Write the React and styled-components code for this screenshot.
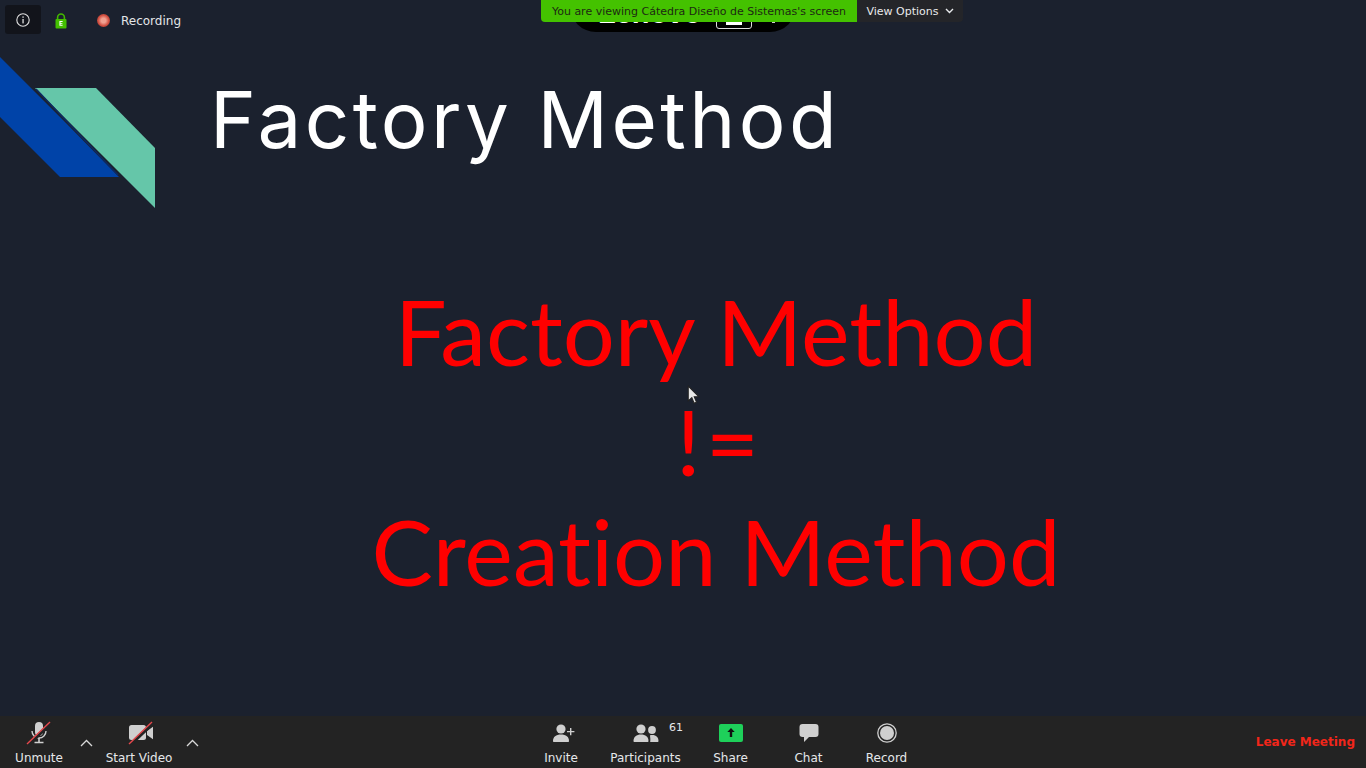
import styled, { createGlobalStyle } from "styled-components";

const GlobalStyle = createGlobalStyle`
  html, body {
    margin: 0;
    padding: 0;
    overflow: hidden;
    background: #1b212e;
  }
`;

const Page = styled.div`
  position: relative;
  width: 1366px;
  height: 768px;
  display: flex;
  flex-direction: column;
  font-family: "DejaVu Sans", sans-serif;
  overflow: hidden;
`;

const Screen = styled.div`
  flex: 1;
  min-height: 0;
  background: #1b212e;
  display: flex;
  flex-direction: column;
`;

const StatusBar = styled.div`
  position: absolute;
  left: 5px;
  top: 5px;
  display: flex;
  align-items: center;
  height: 31px;
`;

const InfoButton = styled.div`
  align-self: flex-start;
  width: 36px;
  height: 29px;
  border-radius: 3px;
  background: #12141b;
  display: flex;
  align-items: center;
  justify-content: center;
`;

const LockWrap = styled.div`
  margin-left: 14px;
  width: 12px;
  display: flex;
`;

const RecDot = styled.div`
  margin-left: 30px;
  width: 13px;
  height: 13px;
  border-radius: 50%;
  background: radial-gradient(circle at 50% 50%, #f0a090 0 25%, #cf4a3c 60%, #80423f 100%);
`;

const RecLabel = styled.span`
  margin-left: 11px;
  font-size: 12px;
  color: #e4e6e8;
`;

const Notice = styled.div`
  position: absolute;
  left: 541px;
  top: 0;
  display: flex;
  height: 22px;
  z-index: 2;
`;

const NoticeText = styled.div`
  width: 316px;
  background: #44c200;
  color: #1d2a12;
  font-size: 11px;
  border-radius: 0 0 0 4px;
  display: flex;
  align-items: center;
  justify-content: center;
  white-space: nowrap;
`;

const ViewOptions = styled.div`
  width: 106px;
  background: #242529;
  color: #e8eaec;
  font-size: 11px;
  border-radius: 0 0 4px 0;
  display: flex;
  align-items: center;
  justify-content: center;
  gap: 6px;
`;

const CameraPill = styled.div`
  position: absolute;
  left: 570px;
  top: -12px;
  width: 226px;
  height: 44px;
  background: #000;
  border-radius: 0 0 26px 26px;
  display: flex;
  align-items: flex-end;
  padding: 0 0 3px 28px;
  box-sizing: border-box;
`;

const CameraBrand = styled.span`
  font-family: "Liberation Sans", sans-serif;
  font-weight: 700;
  font-size: 29px;
  line-height: 24px;
  padding-bottom: 4px;
  color: #fff;
`;

const CameraBox = styled.div`
  margin-left: 15px;
  width: 36px;
  height: 24px;
  border: 1px solid #ddd;
  border-radius: 3px;
  box-sizing: border-box;
  display: flex;
  align-items: flex-end;
  justify-content: center;
  padding-bottom: 3px;
`;

const CameraGlyph = styled.div`
  width: 16px;
  height: 7px;
  background: #fff;
`;

const CameraTick = styled.div`
  width: 3px;
  height: 2px;
  margin: 0 0 6px 20px;
  background: #ccc;
`;

const SlideHeader = styled.div`
  display: flex;
  align-items: flex-start;
  padding-top: 57px;
  height: 151px;
`;

const SlideLogo = styled.svg`
  display: block;
  flex: none;
`;

const SlideTitle = styled.h1`
  margin: 0 0 0 55px;
  padding-top: 14px;
  font-family: Inter, sans-serif;
  font-weight: 400;
  font-size: 78px;
  line-height: 98px;
  color: #fff;
  white-space: nowrap;
  letter-spacing: 3.4px;
`;

const SlideBody = styled.div`
  margin-top: 68px;
  padding-left: 66px;
  display: flex;
  flex-direction: column;
  align-items: center;
  font-family: Lato, sans-serif;
  font-size: 92px;
  font-variant-ligatures: none;
  line-height: 110px;
  color: #ff0000;
`;

const BodyLine = styled.div`
  white-space: nowrap;
  letter-spacing: ${(p) => p.$spacing || 0}px;
  padding-left: ${(p) => p.$indent || 0}px;
`;

const Cursor = styled.svg`
  position: absolute;
  left: 687px;
  top: 385px;
`;

const Toolbar = styled.div`
  flex: none;
  height: 52px;
  background: #232323;
  display: flex;
  align-items: stretch;
  position: relative;
`;

const LeftGroup = styled.div`
  display: flex;
  width: 530px;
`;

const CenterGroup = styled.div`
  display: flex;
`;

const ToolButton = styled.div`
  position: relative;
  width: ${(p) => p.$w}px;
  margin-left: ${(p) => p.$ml || 0}px;
  display: flex;
  flex-direction: column;
  align-items: center;
  padding-top: 4px;
  box-sizing: border-box;
`;

const IconSlot = styled.div`
  height: 25px;
  display: flex;
  align-items: center;
  justify-content: center;
`;

const ToolLabel = styled.span`
  margin-top: 6px;
  font-size: 12px;
  line-height: 14px;
  color: #e6e8ea;
  white-space: nowrap;
`;

const Caret = styled.svg`
  flex: none;
  margin-top: 23px;
  margin-left: ${(p) => p.$ml}px;
`;

const Count = styled.span`
  position: absolute;
  top: 5px;
  left: 77px;
  font-size: 11px;
  line-height: 13px;
  color: #e6e8ea;
`;

const Leave = styled.div`
  margin-left: auto;
  padding-right: 11px;
  padding-bottom: 1px;
  align-self: center;
  font-size: 12px;
  font-weight: 700;
  color: #f2261a;
  white-space: nowrap;
`;

const Slash = () => (
  <>
    <line x1="1" y1="23" x2="24" y2="1" stroke="#232323" strokeWidth="3.5" transform="translate(1 1)" />
    <line x1="1" y1="23" x2="24" y2="1" stroke="#e5484d" strokeWidth="1.4" />
  </>
);

const App = () => {
  return (
    <Page>
      <GlobalStyle />
      <Screen>
        <SlideHeader>
          <SlideLogo width="155" height="151" viewBox="0 0 155 151">
            <polygon points="0,0 63,63 119,120 60,120 0,60" fill="#0043a8" />
            <polygon points="35,31 96,31 155,91 155,151" fill="#65c6a9" />
            <line x1="36" y1="32" x2="118" y2="118" stroke="#0d2a63" strokeWidth="1.5" />
          </SlideLogo>
          <SlideTitle>Factory Method</SlideTitle>
        </SlideHeader>
        <SlideBody>
          <BodyLine>Factory Method</BodyLine>
          <BodyLine $spacing={5} $indent={8}>!=</BodyLine>
          <BodyLine>Creation Method</BodyLine>
        </SlideBody>
      </Screen>

      <StatusBar>
        <InfoButton>
          <svg width="16" height="16" viewBox="0 0 16 16" fill="none">
            <circle cx="8" cy="8" r="6.2" stroke="#e0e0e0" strokeWidth="1.1" />
            <rect x="7.4" y="7" width="1.3" height="4.4" fill="#e0e0e0" />
            <rect x="7.4" y="4.4" width="1.3" height="1.4" fill="#e0e0e0" />
          </svg>
        </InfoButton>
        <LockWrap>
          <svg width="12" height="16" viewBox="0 0 12 16" fill="none">
            <path d="M2.6 7V4.4a3.4 3.4 0 0 1 6.8 0V7" stroke="#43b800" strokeWidth="1.6" />
            <rect x="0.5" y="6" width="11" height="9.5" rx="1" fill="#43c000" />
            <path d="M4.4 8h3.2v1H5.5v.9h1.9v.9H5.5v1h2.1v1H4.4z" fill="#fff" />
          </svg>
        </LockWrap>
        <RecDot />
        <RecLabel>Recording</RecLabel>
      </StatusBar>

      <CameraPill>
        <CameraBrand>Lenovo</CameraBrand>
        <CameraBox>
          <CameraGlyph />
        </CameraBox>
        <CameraTick />
      </CameraPill>

      <Notice>
        <NoticeText>You are viewing Cátedra Diseño de Sistemas's screen</NoticeText>
        <ViewOptions>
          View Options
          <svg width="9" height="6" viewBox="0 0 9 6" fill="none">
            <path d="M1 1l3.5 3.5L8 1" stroke="#e8eaec" strokeWidth="1.4" />
          </svg>
        </ViewOptions>
      </Notice>

      <Cursor width="13" height="20" viewBox="0 0 12 19">
        <path d="M1 1v14l3.4-3 2.2 5.4 2.3-1-2.2-5.2h4.5z" fill="#e8e8e8" stroke="#222" strokeWidth="1" />
      </Cursor>

      <Toolbar>
        <LeftGroup>
          <ToolButton $w={62} $ml={8}>
            <IconSlot>
              <svg width="26" height="24" viewBox="0 0 26 24" fill="none">
                <rect x="9" y="1" width="8" height="14" rx="4" fill="#cfcfcf" />
                <path d="M6 10a7 7 0 0 0 14 0" stroke="#cfcfcf" strokeWidth="1.4" />
                <path d="M13 17v4M8.5 21.5h9" stroke="#cfcfcf" strokeWidth="1.6" />
                <Slash />
              </svg>
            </IconSlot>
            <ToolLabel>Unmute</ToolLabel>
          </ToolButton>
          <Caret $ml={10} width="13" height="8" viewBox="0 0 13 8" fill="none">
            <path d="M1 7l5.5-5.5L12 7" stroke="#d8d8d8" strokeWidth="1.3" />
          </Caret>
          <ToolButton $w={84} $ml={4}>
            <IconSlot>
              <svg width="30" height="24" viewBox="-4 0 30 24" fill="none">
                <rect x="1" y="4" width="17" height="15" rx="2.5" fill="#cfcfcf" />
                <path d="M19 10l6-4.2v12.4L19 14z" fill="#cfcfcf" />
                <Slash />
              </svg>
            </IconSlot>
            <ToolLabel>Start Video</ToolLabel>
          </ToolButton>
          <Caret $ml={5} width="13" height="8" viewBox="0 0 13 8" fill="none">
            <path d="M1 7l5.5-5.5L12 7" stroke="#d8d8d8" strokeWidth="1.3" />
          </Caret>
        </LeftGroup>

        <CenterGroup>
          <ToolButton $w={62}>
            <IconSlot>
              <svg width="29" height="20" viewBox="-5 0 29 20" fill="#cfcfcf">
                <circle cx="9" cy="6" r="4.6" />
                <path d="M1 18c0-4 3-6.4 8-6.4s8 2.4 8 6.4c0 .6-.4 1-1 1H2c-.6 0-1-.4-1-1z" />
                <path d="M18 5h1.4v3h3v1.3h-3v3H18v-3h-3V8h3z" />
              </svg>
            </IconSlot>
            <ToolLabel>Invite</ToolLabel>
          </ToolButton>
          <ToolButton $w={107}>
            <IconSlot>
              <svg width="26" height="20" viewBox="0 0 26 20" fill="#cfcfcf">
                <circle cx="8" cy="6" r="4.6" />
                <path d="M0.500 18c0-4 3-6.400 7.500-6.400S15.500 14 15.500 18c0 .6-.4 1-1 1H1.500c-.6 0-1-.4-1-1z" />
                <circle cx="19" cy="7" r="3.900" />
                <path d="M17 12.300c1-.2 1.500-.3 2.300-.3 4 0 6.200 2.400 6.200 6 0 .6-.4 1-1 1h-7.300c.4-2.700-.1-4.900-.2-6.700z" />
              </svg>
            </IconSlot>
            <ToolLabel>Participants</ToolLabel>
            <Count>61</Count>
          </ToolButton>
          <ToolButton $w={63}>
            <IconSlot>
              <svg width="24" height="18" viewBox="0 0 24 18">
                <rect width="24" height="18" rx="2" fill="#1ed05a" />
                <path d="M12 4l3.700 4h-2.500v5h-2.400V8H8.300z" fill="#111" />
              </svg>
            </IconSlot>
            <ToolLabel>Share</ToolLabel>
          </ToolButton>
          <ToolButton $w={93}>
            <IconSlot>
              <svg width="20" height="20" viewBox="0 0 20 20" fill="#cfcfcf">
                <path d="M3.500 1h13A3 3 0 0 1 19.500 4v7a3 3 0 0 1-3 3H10l-5 5v-5H3.500a3 3 0 0 1-3-3V4a3 3 0 0 1 3-3z" />
              </svg>
            </IconSlot>
            <ToolLabel>Chat</ToolLabel>
          </ToolButton>
          <ToolButton $w={63}>
            <IconSlot>
              <svg width="20" height="20" viewBox="0 0 20 20" fill="none">
                <circle cx="10" cy="10" r="9.200" stroke="#cfcfcf" strokeWidth="1.300" />
                <circle cx="10" cy="10" r="7" fill="#cfcfcf" />
              </svg>
            </IconSlot>
            <ToolLabel>Record</ToolLabel>
          </ToolButton>
        </CenterGroup>

        <Leave>Leave Meeting</Leave>
      </Toolbar>
    </Page>
  );
};

export default App;
